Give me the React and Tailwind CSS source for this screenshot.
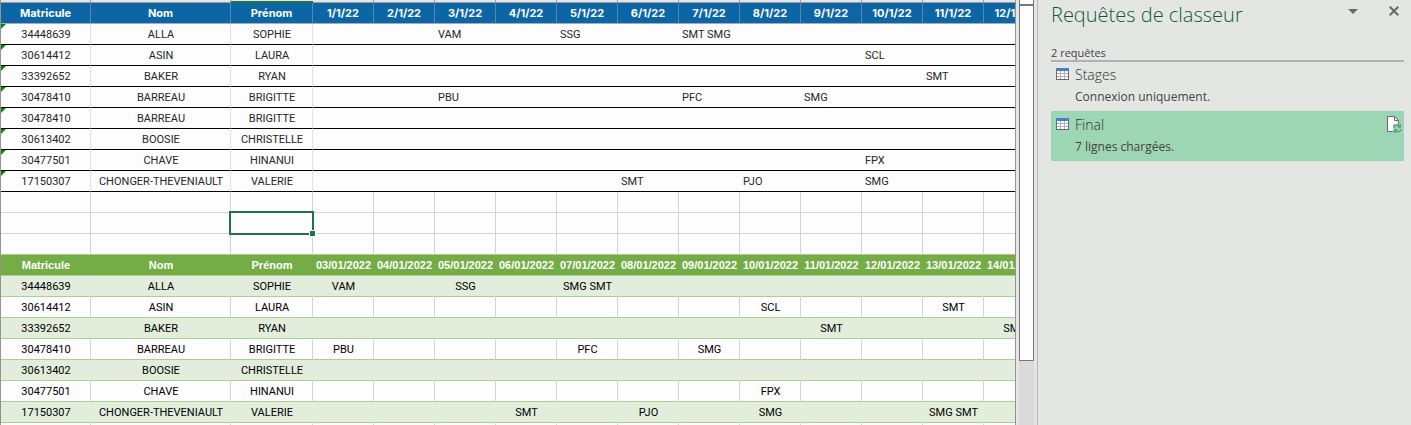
import React from 'react';
import clsx from 'clsx';

const DAY_COUNT = 12;

const rawDays = Array.from({ length: DAY_COUNT }, (_, i) => `${i + 1}/1/22`);
const finalDays = Array.from({ length: DAY_COUNT }, (_, i) => `${String(i + 3).padStart(2, '0')}/01/2022`);

const rawRows = [
  { id: '34448639', nom: 'ALLA', prenom: 'SOPHIE', stages: { 2: 'VAM', 4: 'SSG', 6: 'SMT SMG' } },
  { id: '30614412', nom: 'ASIN', prenom: 'LAURA', stages: { 9: 'SCL' } },
  { id: '33392652', nom: 'BAKER', prenom: 'RYAN', stages: { 10: 'SMT' } },
  { id: '30478410', nom: 'BARREAU', prenom: 'BRIGITTE', stages: { 2: 'PBU', 6: 'PFC', 8: 'SMG' } },
  { id: '30478410', nom: 'BARREAU', prenom: 'BRIGITTE', stages: {} },
  { id: '30613402', nom: 'BOOSIE', prenom: 'CHRISTELLE', stages: {} },
  { id: '30477501', nom: 'CHAVE', prenom: 'HINANUI', stages: { 9: 'FPX' } },
  { id: '17150307', nom: 'CHONGER-THEVENIAULT', prenom: 'VALERIE', stages: { 5: 'SMT', 7: 'PJO', 9: 'SMG' } },
];

const finalRows = [
  { id: '34448639', nom: 'ALLA', prenom: 'SOPHIE', stages: { 0: 'VAM', 2: 'SSG', 4: 'SMG SMT' } },
  { id: '30614412', nom: 'ASIN', prenom: 'LAURA', stages: { 7: 'SCL', 10: 'SMT' } },
  { id: '33392652', nom: 'BAKER', prenom: 'RYAN', stages: { 8: 'SMT', 11: 'SMT' } },
  { id: '30478410', nom: 'BARREAU', prenom: 'BRIGITTE', stages: { 0: 'PBU', 4: 'PFC', 6: 'SMG' } },
  { id: '30613402', nom: 'BOOSIE', prenom: 'CHRISTELLE', stages: {} },
  { id: '30477501', nom: 'CHAVE', prenom: 'HINANUI', stages: { 7: 'FPX' } },
  { id: '17150307', nom: 'CHONGER-THEVENIAULT', prenom: 'VALERIE', stages: { 3: 'SMT', 5: 'PJO', 7: 'SMG', 10: 'SMG SMT' } },
];

const days = Array.from({ length: DAY_COUNT }, (_, i) => i);

const Grid = ({ label, children }) => (
  <table aria-label={label} className="w-[1044px] table-fixed border-separate border-spacing-0 text-center text-[11px] leading-5">
    <colgroup>
      <col className="w-[90px]" />
      <col className="w-[140px]" />
      <col className="w-[82px]" />
      {days.map((d) => (
        <col key={d} className="w-[61px]" />
      ))}
    </colgroup>
    {children}
  </table>
);

const HeaderRow = ({ dates, cellClass }) => (
  <thead>
    <tr>
      {['Matricule', 'Nom', 'Prénom', ...dates].map((title) => (
        <th key={title} scope="col" className={clsx('h-[21px] border-b p-0 font-bold whitespace-nowrap text-white', cellClass)}>
          {title}
        </th>
      ))}
    </tr>
  </thead>
);

// Column letters are scrolled away, only their lower edge remains
const ColumnEdge = () => (
  <div className="flex h-[3px] w-[1044px] border-b border-[#9b9b9b] bg-[#e6e6e6]">
    <div className="w-[90px] border-r border-[#9b9b9b]" />
    <div className="w-[140px] border-r border-[#9b9b9b]" />
    <div className="-mb-px h-[3px] w-[82px] border-b-2 border-[#217346]" />
    {days.map((d) => (
      <div key={d} className="w-[61px] border-r border-[#9b9b9b]" />
    ))}
  </div>
);

const rawCell = 'relative h-[21px] border-r border-b border-r-[#e1e1e1] border-b-black p-0 pt-[2px] pl-px';

const RawTable = () => (
  <Grid label="Stages">
    <HeaderRow dates={rawDays} cellClass="border-r border-r-[#5b86b4] border-b-[#a9a9c4] bg-[#0c65a4] font-['Inter',sans-serif]" />
    <tbody className="font-['Roboto',sans-serif] leading-[18px] text-[#262626]">
      {rawRows.map((row, i) => (
        <tr key={i}>
          <td className={rawCell}>
            <span className="absolute top-0 left-0 border-t-[5px] border-r-[5px] border-t-[#0b840b] border-r-transparent" />
            {row.id}
          </td>
          <td className={rawCell}>{row.nom}</td>
          <td className={rawCell}>{row.prenom}</td>
          {days.map((d) => (
            <td key={d} className="border-b border-black p-0 pt-[2px] pl-[3px] text-left whitespace-nowrap">
              {row.stages[d]}
            </td>
          ))}
        </tr>
      ))}
    </tbody>
  </Grid>
);

const EmptyRows = ({ count, selected }) => (
  <Grid label="Cellules vides">
    <tbody>
      {Array.from({ length: count }, (_, r) => (
        <tr key={r}>
          {Array.from({ length: DAY_COUNT + 3 }, (_, c) => (
            <td
              key={c}
              className={clsx(
                'relative h-[21px] border-r border-b border-r-[#d4d4d4] p-0',
                r < count - 1 ? 'border-b-[#d4d4d4]' : 'border-b-[#a9d08e]',
              )}
            >
              {selected && r === selected.row && c === 0 && (
                <span className="absolute inset-y-0 -left-px w-px bg-[#217346]" />
              )}
              {selected && r === selected.row && c === selected.col && (
                <span className="absolute -inset-[2px] z-10 border-2 border-[#217346]">
                  <span className="absolute -right-[4px] -bottom-[4px] size-[7px] border border-white bg-[#217346]" />
                </span>
              )}
            </td>
          ))}
        </tr>
      ))}
    </tbody>
  </Grid>
);

const FinalTable = () => (
  <Grid label="Final">
    <HeaderRow dates={finalDays} cellClass="border-b-[#a9d08e] bg-[#74ad46]" />
    <tbody className="font-['Roboto',sans-serif] leading-[18px] text-black">
      {finalRows.map((row, i) => {
        const cell = clsx(
          'h-[21px] border-r border-b border-b-[#a9d08e] p-0 pt-[2px] pl-px whitespace-nowrap',
          i % 2 === 0 ? 'border-r-[#e2eedb] bg-[#e2eedb]' : 'border-r-[#d4d4d4]',
        );
        return (
          <tr key={row.id}>
            <td className={cell}>{row.id}</td>
            <td className={cell}>{row.nom}</td>
            <td className={cell}>{row.prenom}</td>
            {days.map((d) => (
              <td key={d} className={cell}>{row.stages[d]}</td>
            ))}
          </tr>
        );
      })}
    </tbody>
  </Grid>
);

const ScrollBar = () => (
  <div className="ml-[3px] flex w-[15px] shrink-0 flex-col bg-[#dbd9dc]">
    <div className="h-1 border-x border-[#777] bg-white" />
    <div className="h-[357px] border border-t-2 border-[#777] bg-[#fdfdfd]" />
  </div>
);

const TableIcon = () => (
  <svg width="13" height="12" viewBox="0 0 13 12" shapeRendering="crispEdges" aria-hidden="true">
    <rect width="13" height="12" fill="#6b686c" />
    <rect width="13" height="3" fill="#4380c4" />
    <rect x="1" y="3" width="11" height="8" fill="#b3b0b5" />
    {[3, 6, 9].map((y) =>
      [1, 5, 9].map((x) => <rect key={`${x}-${y}`} x={x} y={y} width="3" height="2" fill="#fff" />),
    )}
  </svg>
);

const RefreshFileIcon = () => (
  <svg width="15" height="17" viewBox="0 0 15 17" fill="none" aria-hidden="true">
    <path d="M.5.5h7l4 4v11H.5z" fill="#fff" stroke="#6b686c" />
    <path d="M7.5.5v4h4" stroke="#6b686c" />
    <path d="M6 8h8v9H6z" fill="#9dd6b5" />
    <path d="M7 12c.3-2 1.600-3 3.500-3 1.200 0 2 .4 2.700 1.200M13.500 8v3h-3M14 13c-.3 2-1.600 3-3.500 3-1.200 0-2-.4-2.700-1.200M7.500 17v-3h3" stroke="#5fa083" strokeWidth="1.3" />
  </svg>
);

const QueryItem = ({ name, status, active }) => (
  <li className={clsx('flex h-[50px] items-start pl-[5px]', active && 'bg-[#9dd6b5]')}>
    <div className="w-[19px] shrink-0 pt-[7px]">
      <TableIcon />
    </div>
    <div className="grow">
      <h3 className="pt-[3px] text-[14px] leading-[22px] font-light text-[#333]">{name}</h3>
      <p className="text-[12px] leading-[22px] text-[#444]">{status}</p>
    </div>
    {active && (
      <button type="button" aria-label="Actualiser" className="mt-[5px] mr-[2px]">
        <RefreshFileIcon />
      </button>
    )}
  </li>
);

const QueriesPane = () => (
  <aside className="ml-[3px] w-[374px] shrink-0 border-l border-[#b9b9b9] pr-[7px] pl-[13px] font-['Open_Sans',sans-serif]">
    <header className="flex h-[46px] items-start">
      <h2 className="grow text-[20px] leading-[30px] font-light text-[#0f5a33]">Requêtes de classeur</h2>
      <button type="button" aria-label="Options du volet" className="mt-[9px] mr-[31px]">
        <svg width="10" height="5" viewBox="0 0 10 5" fill="#6b686c" aria-hidden="true">
          <path d="M0 0h10L5 5z" />
        </svg>
      </button>
      <button type="button" aria-label="Fermer" className="mt-[6px] mr-[5px]">
        <svg width="10" height="10" viewBox="0 0 10 10" stroke="#6b686c" strokeWidth="2" aria-hidden="true">
          <path d="M.7.7l8.600 8.600M9.300.7L.7 9.300" />
        </svg>
      </button>
    </header>
    <p className="h-4 border-b-2 border-[#b3b0b5] text-[11px] leading-[14px] text-[#444]">2 requêtes</p>
    <ul className="-mt-px">
      <QueryItem name="Stages" status="Connexion uniquement." />
      <QueryItem name="Final" status="7 lignes chargées." active />
    </ul>
  </aside>
);

export default function App() {
  return (
    <div className="flex h-screen overflow-hidden bg-[#e4e6e3]">
      <main className="min-w-0 flex-1 overflow-hidden border-x border-[#949494] bg-[#fdfdfd] font-['Liberation_Sans',Arial,sans-serif]">
        <ColumnEdge />
        <RawTable />
        <EmptyRows count={3} selected={{ row: 1, col: 2 }} />
        <FinalTable />
        <EmptyRows count={1} />
      </main>
      <ScrollBar />
      <QueriesPane />
    </div>
  );
}
